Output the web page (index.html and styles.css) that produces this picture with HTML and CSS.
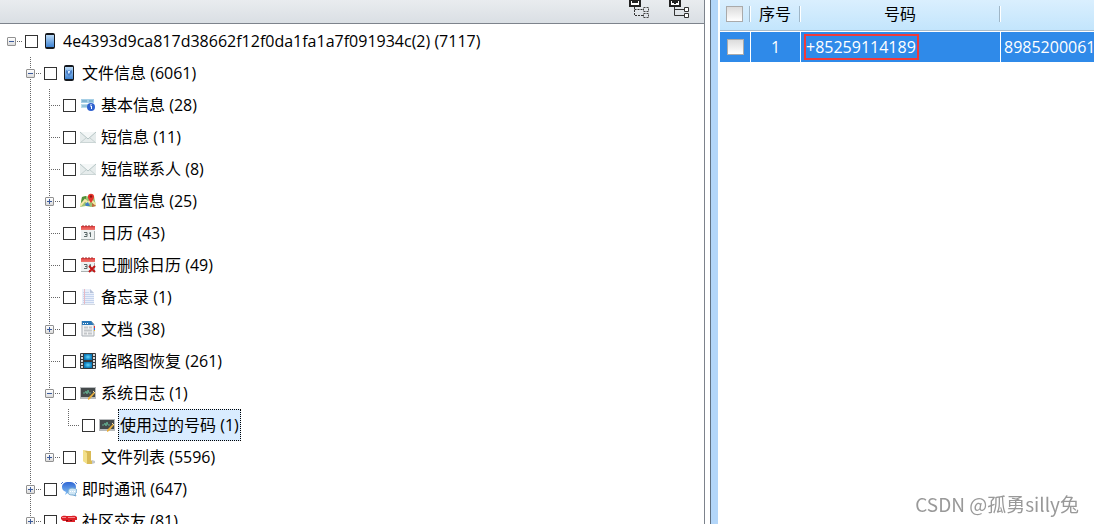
FILE: index.html
```html
<!DOCTYPE html>
<html lang="zh-CN">

<head>
  <meta charset="utf-8" />
  <meta name="viewport" content="width=device-width, initial-scale=1.0" />
  <title>文件信息</title>
  <link rel="stylesheet" href="styles.css">
</head>

<body>
  <svg class="sprite" aria-hidden="true">
    <defs>
      <linearGradient id="g-screen" x1="0" y1="0" x2="0" y2="1">
        <stop offset="0" stop-color="#b9d9f6" />
        <stop offset="1" stop-color="#3f83d2" />
      </linearGradient>
      <linearGradient id="g-red" x1="0" y1="0" x2="0" y2="1">
        <stop offset="0" stop-color="#e23c3c" />
        <stop offset="1" stop-color="#f07a72" />
      </linearGradient>
      <linearGradient id="g-folder" x1="0" y1="0" x2="1" y2="0">
        <stop offset="0" stop-color="#f6e58c" />
        <stop offset="1" stop-color="#cda63a" />
      </linearGradient>
      <radialGradient id="g-film">
        <stop offset="0" stop-color="#5fd8ff" />
        <stop offset="1" stop-color="#0b78b8" />
      </radialGradient>
      <linearGradient id="g-bubble" x1="0" y1="0" x2="0" y2="1">
        <stop offset="0" stop-color="#2f66d4" />
        <stop offset="1" stop-color="#86c4f6" />
      </linearGradient>
    </defs>
    <symbol id="i-phone" viewBox="0 0 16 16">
      <rect x="3" y="0" width="10" height="16" rx="2" fill="#15181d" />
      <rect x="4" y="2" width="8" height="12" fill="url(#g-screen)" />
    </symbol>
    <symbol id="i-phone-info" viewBox="0 0 16 16">
      <rect x="3" y="0" width="10" height="16" rx="2" fill="#15181d" />
      <rect x="4" y="2" width="8" height="12" fill="url(#g-screen)" />
      <path d="M5 5l2 1 1-1 1 1 2-1v3L8 11 5 8z" fill="#4a7fc8" />
      <path d="M7 6h2v1L8 9 7 8z" fill="#d6ebff" />
    </symbol>
    <symbol id="i-info" viewBox="0 0 16 16">
      <rect x="1" y="2" width="13" height="4" fill="#a6cfe6" />
      <path d="M2 4h5M9 4h4" stroke="#5f9bbd" />
      <rect x="1" y="7" width="11" height="4" fill="#b9dcec" />
      <path d="M2 9h5" stroke="#6fa7c4" />
      <circle cx="11" cy="10" r="4" fill="#2f61cf" />
      <path d="M10 9h1.500v3M11 7v1" stroke="#fff" fill="none" />
    </symbol>
    <symbol id="i-mail" viewBox="0 0 16 16">
      <rect x="0" y="3" width="16" height="11" fill="#e6ecec" />
      <path d="M0 3l8 7 8-7" fill="#f4f7f7" stroke="#b5c4c4" />
      <path d="M0 14l6-5M16 14l-6-5" stroke="#c6d1d1" />
      <path d="M0 13.500h16" stroke="#cbd5d5" />
    </symbol>
    <symbol id="i-map" viewBox="0 0 16 16">
      <path d="M2 4l4-1 4 1 4-1 2 10-5 1-5-1-6 1z" fill="#9cc274" />
      <path d="M2 4l4-1v5l-5 2z" fill="#4f8f3a" />
      <path d="M0 13l5-6 3 3 3-3 5 5" stroke="#f6e9a8" stroke-width="2" fill="none" />
      <path d="M5 11l3-2 2 4H6z" fill="#3f7fc4" />
      <path d="M12 10l4 3-4 1z" fill="#c06a3c" />
      <path d="M11 10C9 7 7.500 5 8 3c.5-3 5.500-3 6 0 .4 2-1 4-3 7z" fill="#e5352c" />
      <circle cx="11" cy="3.500" r="1.200" fill="#8c1814" />
    </symbol>
    <symbol id="i-calendar" viewBox="0 0 16 16">
      <rect x="1" y="2" width="14" height="13" fill="#eef2f2" />
      <rect x="1" y="1" width="14" height="4" fill="url(#g-red)" />
      <path d="M3 0v2M6 0v2M9 0v2M12 0v2" stroke="#9c3434" />
      <path d="M4 7.500h3v4H4M5 9.500h2M9 8.500l1.500-1v4.500" stroke="#5d6b6b" fill="none" />
      <path d="M1 14.500h14M14.500 6v8" stroke="#a9b1b1" />
    </symbol>
    <symbol id="i-calendar-del" viewBox="0 0 16 16">
      <use href="#i-calendar" width="16" height="16" />
      <path d="M9 9l6 6M15 9l-6 6" stroke="#c21515" stroke-width="2" />
    </symbol>
    <symbol id="i-note" viewBox="0 0 16 16">
      <path d="M2 0h8l4 4v11H2z" fill="#e9effa" />
      <path d="M10 0l4 4h-4z" fill="#b8c4da" />
      <path d="M3 3.500h6M3 5.500h11M3 7.500h11M3 9.500h11M3 11.500h11M3 13.500h11" stroke="#c6d4ee" />
      <path d="M4.500 0v15" stroke="#e8b9c2" />
      <path d="M1 15.500h14" stroke="#d4d9e2" />
    </symbol>
    <symbol id="i-doc" viewBox="0 0 16 16">
      <path d="M2 0h9l3 3v12H2z" fill="#f2f3f4" stroke="#a7adb4" />
      <path d="M2 0h9l3 4H2z" fill="#2b78b8" />
      <path d="M3 2.500h1M5 2.500h1M7 2.500h1" stroke="#fff" />
      <path d="M4 6.500h4M9 6.500h3M4 9.500h8M4 12.500h3M8 12.500h4" stroke="#c4c7ca" stroke-width="2" />
      <path d="M14.500 5v2" stroke="#e33" />
      <path d="M14.500 7v2" stroke="#2b6fe0" />
      <path d="M14.500 9v1" stroke="#e9b52a" />
    </symbol>
    <symbol id="i-film" viewBox="0 0 16 16">
      <rect x="0" y="0" width="16" height="16" rx="1" fill="#35383b" />
      <path d="M2 1v15M14 1v15" stroke="#d7dbde" stroke-width="2" stroke-dasharray="2 1" />
      <rect x="4" y="1" width="8" height="6" fill="url(#g-film)" />
      <rect x="4" y="9" width="8" height="6" fill="url(#g-film)" />
    </symbol>
    <symbol id="i-log" viewBox="0 0 16 16">
      <rect x="0" y="2" width="16" height="12" fill="#b9bcbe" />
      <rect x="1" y="3" width="14" height="9" fill="#444a4b" />
      <path d="M3 8h2l1-2 1 3 1-4 1 3h2" stroke="#62a98c" fill="none" />
      <path d="M8 13l6-6 1 1-5 6-2 1z" fill="#e8ae3c" />
      <path d="M13 6l2 2" stroke="#f6dca4" />
    </symbol>
    <symbol id="i-folder" viewBox="0 0 16 16">
      <path d="M3 1l5 1v13l-5-3z" fill="url(#g-folder)" />
      <path d="M7 2h4v9l1 1v3H7z" fill="#d9ba55" />
      <path d="M3 1v11l4 3V4z" fill="#f3e08a" />
      <path d="M12 11l3 1v2l-3 1z" fill="#c3c8cc" />
    </symbol>
    <symbol id="i-chat" viewBox="0 0 16 16">
      <path d="M8 1c5 0 7 2 7 5s-3 5-7 5l-4 3 1-3C2 10 1 8 1 6c0-3 2-5 7-5z" fill="url(#g-bubble)" />
      <path d="M0 3l2-2M14 1l2 2" stroke="#4d7ad6" />
      <path d="M11 7c3 0 5 1 5 3 0 1-1 2-2 3l1 2-3-1c-4 0-5-1-5-3s1-4 4-4z" fill="#cfe6f5" stroke="#6fa5cf" />
      <path d="M9 10.500h1M11 10.500h1M13 10.500h1" stroke="#fff" />
    </symbol>
    <symbol id="i-social" viewBox="0 0 16 16">
      <path d="M0 4c2-2 4-1 8-1s6-1 8 1v3h-2v2H5V8H2L0 6z" fill="#dc2027" />
      <path d="M1 4.500h4M7 4.500h7" stroke="#f3868a" />
      <path d="M5 7.500h2M9 7.500h2" stroke="#7e0c10" />
    </symbol>
    <symbol id="i-collapse-all" viewBox="0 0 20 18">
      <path d="M1 0h10v6H1z" fill="#fff" stroke="#222" stroke-width="2" />
      <path d="M3 1h6v2H3z" fill="#222" />
      <path d="M5.500 7v8.500H14M5.500 9.500H14" stroke="#333" stroke-dasharray="2 1" fill="none" />
      <path d="M14.500 7.500h5v4h-5zM14.500 13.500h5v4h-5z" stroke="#444" stroke-dasharray="2 1" fill="none" />
    </symbol>
    <symbol id="i-expand-all" viewBox="0 0 20 18">
      <path d="M1 0h10v6H1z" fill="#fff" stroke="#222" stroke-width="2" />
      <path d="M3 1h6v2H3zM5 0h2v4H5z" fill="#222" />
      <path d="M5.500 7v8.500H15M5.500 9.500H15" stroke="#333" fill="none" />
      <path d="M15.500 7.500h4v4h-4zM15.500 13.500h4v4h-4z" stroke="#333" fill="#fff" />
    </symbol>
  </svg>

  <main class="split">
    <section class="tree-pane">
      <div class="toolbar">
        <button type="button" aria-label="全部折叠"><svg><use href="#i-collapse-all" /></svg></button>
        <button type="button" aria-label="全部展开"><svg><use href="#i-expand-all" /></svg></button>
      </div>

      <ul class="tree">
        <li>
          <div class="row">
            <button type="button" class="toggle open" aria-label="折叠"></button><span class="dots"></span>
            <input type="checkbox" id="n-root">
            <svg class="icon"><use href="#i-phone" /></svg>
            <label for="n-root">4e4393d9ca817d38662f12f0da1fa1a7f091934c(2) (7117)</label>
          </div>
          <ul>
            <li>
              <div class="row">
                <button type="button" class="toggle open" aria-label="折叠"></button><span class="dots"></span>
                <input type="checkbox" id="n-files">
                <svg class="icon"><use href="#i-phone-info" /></svg>
                <label for="n-files">文件信息 (6061)</label>
              </div>
              <ul>
                <li>
                  <div class="row">
                    <span class="dots leaf"></span>
                    <input type="checkbox" id="n-basic">
                    <svg class="icon"><use href="#i-info" /></svg>
                    <label for="n-basic">基本信息 (28)</label>
                  </div>
                </li>
                <li>
                  <div class="row">
                    <span class="dots leaf"></span>
                    <input type="checkbox" id="n-sms">
                    <svg class="icon"><use href="#i-mail" /></svg>
                    <label for="n-sms">短信息 (11)</label>
                  </div>
                </li>
                <li>
                  <div class="row">
                    <span class="dots leaf"></span>
                    <input type="checkbox" id="n-contacts">
                    <svg class="icon"><use href="#i-mail" /></svg>
                    <label for="n-contacts">短信联系人 (8)</label>
                  </div>
                </li>
                <li>
                  <div class="row">
                    <button type="button" class="toggle" aria-label="展开"></button><span class="dots"></span>
                    <input type="checkbox" id="n-location">
                    <svg class="icon"><use href="#i-map" /></svg>
                    <label for="n-location">位置信息 (25)</label>
                  </div>
                </li>
                <li>
                  <div class="row">
                    <span class="dots leaf"></span>
                    <input type="checkbox" id="n-calendar">
                    <svg class="icon"><use href="#i-calendar" /></svg>
                    <label for="n-calendar">日历 (43)</label>
                  </div>
                </li>
                <li>
                  <div class="row">
                    <span class="dots leaf"></span>
                    <input type="checkbox" id="n-calendar-del">
                    <svg class="icon"><use href="#i-calendar-del" /></svg>
                    <label for="n-calendar-del">已删除日历 (49)</label>
                  </div>
                </li>
                <li>
                  <div class="row">
                    <span class="dots leaf"></span>
                    <input type="checkbox" id="n-memo">
                    <svg class="icon"><use href="#i-note" /></svg>
                    <label for="n-memo">备忘录 (1)</label>
                  </div>
                </li>
                <li>
                  <div class="row">
                    <button type="button" class="toggle" aria-label="展开"></button><span class="dots"></span>
                    <input type="checkbox" id="n-docs">
                    <svg class="icon"><use href="#i-doc" /></svg>
                    <label for="n-docs">文档 (38)</label>
                  </div>
                </li>
                <li>
                  <div class="row">
                    <span class="dots leaf"></span>
                    <input type="checkbox" id="n-thumbs">
                    <svg class="icon"><use href="#i-film" /></svg>
                    <label for="n-thumbs">缩略图恢复 (261)</label>
                  </div>
                </li>
                <li>
                  <div class="row">
                    <button type="button" class="toggle open" aria-label="折叠"></button><span class="dots"></span>
                    <input type="checkbox" id="n-syslog">
                    <svg class="icon"><use href="#i-log" /></svg>
                    <label for="n-syslog">系统日志 (1)</label>
                  </div>
                  <ul>
                    <li>
                      <div class="row">
                        <span class="dots leaf"></span>
                        <input type="checkbox" id="n-numbers">
                        <svg class="icon"><use href="#i-log" /></svg>
                        <label for="n-numbers" class="selected">使用过的号码 (1)</label>
                      </div>
                    </li>
                  </ul>
                </li>
                <li>
                  <div class="row">
                    <button type="button" class="toggle" aria-label="展开"></button><span class="dots"></span>
                    <input type="checkbox" id="n-list">
                    <svg class="icon"><use href="#i-folder" /></svg>
                    <label for="n-list">文件列表 (5596)</label>
                  </div>
                </li>
              </ul>
            </li>
            <li>
              <div class="row">
                <button type="button" class="toggle" aria-label="展开"></button><span class="dots"></span>
                <input type="checkbox" id="n-im">
                <svg class="icon"><use href="#i-chat" /></svg>
                <label for="n-im">即时通讯 (647)</label>
              </div>
            </li>
            <li>
              <div class="row">
                <button type="button" class="toggle" aria-label="展开"></button><span class="dots"></span>
                <input type="checkbox" id="n-social">
                <svg class="icon"><use href="#i-social" /></svg>
                <label for="n-social">社区交友 (81)</label>
              </div>
            </li>
          </ul>
        </li>
      </ul>
    </section>

    <div class="splitter"></div>

    <section class="data-pane">
      <table>
        <colgroup>
          <col class="c-check">
          <col class="c-index">
          <col class="c-number">
          <col class="c-iccid">
        </colgroup>
        <thead>
          <tr>
            <th><input type="checkbox" aria-label="全选"></th>
            <th>序号</th>
            <th>号码</th>
            <th></th>
          </tr>
        </thead>
        <tbody>
          <tr>
            <td><input type="checkbox" aria-label="选择第 1 行"></td>
            <td class="center">1</td>
            <td><span class="marked">+85259114189</span></td>
            <td>8985200061</td>
          </tr>
        </tbody>
      </table>
    </section>
  </main>

  <div class="watermark">CSDN @孤勇silly兔</div>
</body>

</html>
```
FILE: styles.css
```css
* {
  box-sizing: border-box;
}

body {
  margin: 0;
  height: 100vh;
  overflow: hidden;
  background: #fff;
  color: #000;
  font: 16px/20px "Open Sans", "Noto Sans CJK SC", sans-serif;
}

.sprite {
  position: absolute;
  width: 0;
  height: 0;
}

.split {
  display: grid;
  grid-template-columns: minmax(0, 705fr) 15px minmax(0, 374fr);
  height: 100%;
}

/* tree */
.tree-pane {
  min-height: 0;
  overflow: hidden;
  border-right: 1px solid #7d838c;
}

.toolbar {
  display: flex;
  justify-content: flex-end;
  gap: 20px;
  height: 24px;
  padding-right: 15px;
  background: linear-gradient(#e9ecef, #dadfe4);
  border-bottom: 1px solid #7d838c;
}

.toolbar button {
  width: 20px;
  height: 18px;
  padding: 0;
  border: 0;
  background: none;
}

.toolbar svg {
  display: block;
  width: 20px;
  height: 18px;
}

.tree,
.tree ul {
  margin: 0;
  padding: 0;
  list-style: none;
}

.tree {
  padding: 1px 0 0 7px;
}

.tree ul {
  padding-left: 19px;
}

.tree li {
  position: relative;
}

/* vertical guide line */
.tree ul > li::before {
  content: "";
  position: absolute;
  top: 0;
  bottom: 0;
  left: 4px;
  width: 1px;
  background: repeating-linear-gradient(#666 0 1px, transparent 1px 2px);
}

.tree ul ul > li:last-child::before {
  bottom: auto;
  height: 16px;
}

.row {
  position: relative;
  display: flex;
  align-items: center;
  height: 32px;
  white-space: nowrap;
}

.toggle {
  flex: none;
  width: 9px;
  height: 9px;
  padding: 0;
  border: 1px solid #919191;
  border-radius: 1px;
  background:
    linear-gradient(#3b5a9a, #3b5a9a) center / 5px 1px no-repeat,
    linear-gradient(#3b5a9a, #3b5a9a) center / 1px 5px no-repeat,
    linear-gradient(#fff, #dcdcdc);
}

.toggle.open {
  background:
    linear-gradient(#3b5a9a, #3b5a9a) center / 5px 1px no-repeat,
    linear-gradient(#fff, #dcdcdc);
}

.dots {
  flex: none;
  width: 6px;
  height: 1px;
  margin: 0 2px 0 1px;
  background: repeating-linear-gradient(90deg, #666 0 1px, transparent 1px 2px);
}

.dots.leaf {
  width: 12px;
  margin-left: 4px;
}

.row input {
  flex: none;
  appearance: none;
  width: 13px;
  height: 13px;
  margin: 0 4px 0 0;
  border: 1px solid #333;
  background: #fff;
}

.icon {
  flex: none;
  width: 16px;
  height: 16px;
  margin-right: 3px;
}

.row label {
  padding: 5px 1px;
  border: 1px solid transparent;
}

.row label.selected {
  background: #d9ecff;
  border: 1px dotted #000;
}

/* splitter */
.splitter {
  margin: 0 2px 0 5px;
  border-left: 1px solid #5f6f80;
  background: #b3d6f9;
}

/* table */
.data-pane {
  min-width: 0;
  overflow: hidden;
}

table {
  width: 480px;
  table-layout: fixed;
  border-collapse: separate;
  border-spacing: 0;
}

.c-check {
  width: 31px;
}

.c-index {
  width: 50px;
}

.c-number {
  width: 200px;
}

th,
td {
  padding: 0;
  font-weight: normal;
  white-space: nowrap;
}

th {
  height: 31px;
  padding: 0 2px 2px 0;
  border-bottom: 1px solid #a9bccb;
  background:
    linear-gradient(#9fb6c7, #9fb6c7) right 1px top 6px / 1px 16px no-repeat,
    linear-gradient(#fff, #fff) right 0 top 6px / 1px 16px no-repeat,
    linear-gradient(#daeffe, #c3e5fc);
}

td {
  height: 31px;
  padding-left: 3px;
  border-top: 1px solid #fff;
  border-right: 1px solid #fff;
  background: #2f8ae9;
  color: #fff;
}

td:first-child,
td.center {
  padding: 0;
  text-align: center;
}

table input {
  display: block;
  appearance: none;
  width: 17px;
  height: 16px;
  margin: 0 auto;
  border: 1px solid #aaa;
  background: linear-gradient(#dcdcdc, #fff);
}

.marked {
  display: inline-block;
  padding: 1px 1px 1px 0;
  border: 2px solid #f03a3a;
}

.watermark {
  position: fixed;
  right: 15px;
  bottom: 10px;
  color: #999;
  font-family: "Noto Sans CJK SC", sans-serif;
  font-size: 19px;
  line-height: 20px;
  text-shadow: 1px 1px 0 #fff;
}
```
